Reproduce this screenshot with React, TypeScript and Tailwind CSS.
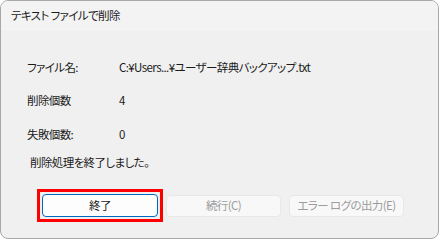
import React from "react";

const font = "font-['Yu_Gothic_UI','Noto_Sans_CJK_JP',sans-serif] [font-feature-settings:'palt']";

export default function App() {
  return (
    <div className={`w-[440px] h-[240px] bg-white ${font} text-[11.5px] tracking-[-0.6px] text-[#1b1b1b]`}>
      <div className="w-[439px] h-[239px] border border-[#a8a8a8] rounded-[8px] overflow-hidden flex flex-col bg-[#f0f0f0]">
        <div className="h-[30px] bg-[#f3f3f3] flex items-center pl-[10px] shrink-0">
          テキスト ファイルで削除
        </div>
        <div className="flex-1 flex flex-col">
          <div className="pl-[26px] pt-[27px] flex flex-col">
            <div className="h-[20px] flex items-center">
              <span className="w-[92px]">ファイル名:</span>
              <span>C:¥Users...¥ユーザー辞典バックアップ.txt</span>
            </div>
            <div className="h-[20px] flex items-center mt-[13px]">
              <span className="w-[92px]">削除個数</span>
              <span>4</span>
            </div>
            <div className="h-[20px] flex items-center mt-[14px]">
              <span className="w-[92px]">失敗個数:</span>
              <span>0</span>
            </div>
            <div className="h-[20px] flex items-center mt-[8px] pl-[3px]">
              削除処理を終了しました。
            </div>
          </div>
          <div className="flex items-center pl-[41px] mt-[21px] gap-[8px]">
            <div className="relative">
              <button className="w-[116px] h-[23px] rounded-[4px] border border-[#0067c0] bg-[#fdfdfd] flex items-center justify-center text-[#1b1b1b]">
                終了
              </button>
              <div className="absolute -inset-[5px] border-[3px] border-[#ff0000]"></div>
            </div>
            <button className="w-[115px] h-[22px] rounded-[4px] border border-[#e8e8e8] bg-[#f8f8f8] flex items-center justify-center text-[#9c9c9c]">
              続行(C)
            </button>
            <button className="w-[115px] h-[22px] rounded-[4px] border border-[#e8e8e8] bg-[#f8f8f8] flex items-center justify-center text-[#9c9c9c]">
              エラー ログの出力(E)
            </button>
          </div>
        </div>
      </div>
    </div>
  );
}
